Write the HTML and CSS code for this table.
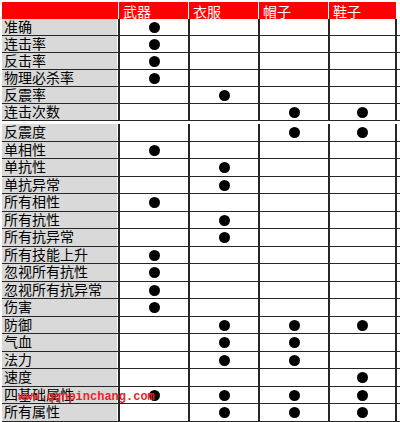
FILE: index.html
```html
<!DOCTYPE html>
<html lang="zh">
<head>
<meta charset="utf-8">
<link rel="stylesheet" href="styles.css">
</head>
<body>
<div class="sheet">
  <div class="head">
    <div class="h"></div><div class="h">武器</div><div class="h">衣服</div><div class="h">帽子</div><div class="h">鞋子</div>
  </div>
  <div class="group-a">
    <div class="row"><div class="name">准确</div><div class="c"><span class="dot"></span></div><div class="c"></div><div class="c"></div><div class="c"></div></div>
    <div class="row"><div class="name">连击率</div><div class="c"><span class="dot"></span></div><div class="c"></div><div class="c"></div><div class="c"></div></div>
    <div class="row"><div class="name">反击率</div><div class="c"><span class="dot"></span></div><div class="c"></div><div class="c"></div><div class="c"></div></div>
    <div class="row"><div class="name">物理必杀率</div><div class="c"><span class="dot"></span></div><div class="c"></div><div class="c"></div><div class="c"></div></div>
    <div class="row"><div class="name">反震率</div><div class="c"></div><div class="c"><span class="dot"></span></div><div class="c"></div><div class="c"></div></div>
    <div class="row"><div class="name">连击次数</div><div class="c"></div><div class="c"></div><div class="c"><span class="dot"></span></div><div class="c"><span class="dot"></span></div></div>
  </div>
  <div class="gap"></div>
  <div class="group-b">
    <div class="row"><div class="name">反震度</div><div class="c"></div><div class="c"></div><div class="c"><span class="dot"></span></div><div class="c"><span class="dot"></span></div></div>
    <div class="row"><div class="name">单相性</div><div class="c"><span class="dot"></span></div><div class="c"></div><div class="c"></div><div class="c"></div></div>
    <div class="row"><div class="name">单抗性</div><div class="c"></div><div class="c"><span class="dot"></span></div><div class="c"></div><div class="c"></div></div>
    <div class="row"><div class="name">单抗异常</div><div class="c"></div><div class="c"><span class="dot"></span></div><div class="c"></div><div class="c"></div></div>
    <div class="row"><div class="name">所有相性</div><div class="c"><span class="dot"></span></div><div class="c"></div><div class="c"></div><div class="c"></div></div>
    <div class="row"><div class="name">所有抗性</div><div class="c"></div><div class="c"><span class="dot"></span></div><div class="c"></div><div class="c"></div></div>
    <div class="row"><div class="name">所有抗异常</div><div class="c"></div><div class="c"><span class="dot"></span></div><div class="c"></div><div class="c"></div></div>
    <div class="row"><div class="name">所有技能上升</div><div class="c"><span class="dot"></span></div><div class="c"></div><div class="c"></div><div class="c"></div></div>
    <div class="row"><div class="name">忽视所有抗性</div><div class="c"><span class="dot"></span></div><div class="c"></div><div class="c"></div><div class="c"></div></div>
    <div class="row"><div class="name">忽视所有抗异常</div><div class="c"><span class="dot"></span></div><div class="c"></div><div class="c"></div><div class="c"></div></div>
    <div class="row"><div class="name">伤害</div><div class="c"><span class="dot"></span></div><div class="c"></div><div class="c"></div><div class="c"></div></div>
    <div class="row"><div class="name">防御</div><div class="c"></div><div class="c"><span class="dot"></span></div><div class="c"><span class="dot"></span></div><div class="c"><span class="dot"></span></div></div>
    <div class="row"><div class="name">气血</div><div class="c"></div><div class="c"><span class="dot"></span></div><div class="c"><span class="dot"></span></div><div class="c"></div></div>
    <div class="row"><div class="name">法力</div><div class="c"></div><div class="c"><span class="dot"></span></div><div class="c"><span class="dot"></span></div><div class="c"></div></div>
    <div class="row"><div class="name">速度</div><div class="c"></div><div class="c"></div><div class="c"></div><div class="c"><span class="dot"></span></div></div>
    <div class="row"><div class="name">四基础属性</div><div class="c"><span class="dot"></span></div><div class="c"><span class="dot"></span></div><div class="c"><span class="dot"></span></div><div class="c"><span class="dot"></span></div></div>
    <div class="row"><div class="name">所有属性</div><div class="c"></div><div class="c"><span class="dot"></span></div><div class="c"><span class="dot"></span></div><div class="c"><span class="dot"></span></div></div>
  </div>
  <div class="watermark">www.qqnpinchang.com</div>
</div>
</body>
</html>
```
FILE: styles.css
```css
html, body {
  margin: 0;
  padding: 0;
  background: #fff;
  overflow: hidden;
}
body {
  font-family: "Noto Sans CJK SC", "Noto Sans", sans-serif;
  color: #000;
}
.sheet {
  position: relative;
  padding: 2px 0 0 2px;
  width: 398px;
}
.head,
.row {
  display: grid;
  grid-template-columns: 116px 70px 70px 70px 69px;
}
.head {
  height: 17px;
}
.h {
  background: #f00;
  color: #fff;
  font-size: 14px;
  line-height: 16px;
  padding: 1px 0 0 4px;
  box-sizing: border-box;
  white-space: nowrap;
}
.h + .h {
  border-left: 1px solid #fff;
}
.h:last-child {
  margin-right: 1px;
}
.row {
  box-sizing: border-box;
  height: 17px;
  border-bottom: 1.5px solid #262626;
}
.group-b .row {
  height: 17.5px;
}
.gap {
  height: 3px;
}
.name {
  background: #d9d9d9;
  border-right: 1px solid #fff;
  font-size: 14px;
  line-height: 15.5px;
  padding: 0 0 0 2px;
  white-space: nowrap;
}
.c {
  border-left: 2px solid #262626;
  display: flex;
  align-items: center;
  justify-content: center;
}
.c:last-child {
  border-right: 2px solid #262626;
}
.dot {
  width: 11px;
  height: 11px;
  border-radius: 50%;
  background: #000;
  margin-top: 1px;
}
.watermark {
  position: absolute;
  left: 18px;
  top: 391px;
  font-family: "Liberation Mono", monospace;
  font-weight: bold;
  font-size: 12px;
  line-height: 12px;
  color: #e8262a;
  white-space: nowrap;
}
```
